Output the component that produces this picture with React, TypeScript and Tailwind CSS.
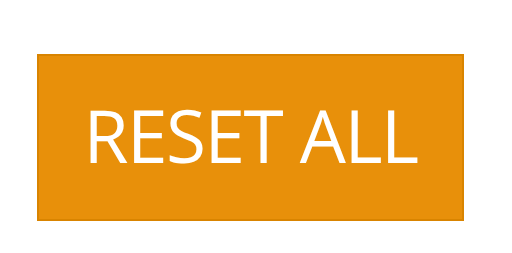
export default function App() {
  return (
    <div className="w-[512px] h-[253px] bg-white pt-[54px] pl-[37px]">
      <button className="w-[427px] h-[167px] bg-[#e8900a] border-2 border-[#d98400] flex items-center justify-center pb-[6px] text-white font-['Open_Sans',sans-serif] text-[73px] leading-none tracking-[-1.5px]">
        RESET ALL
      </button>
    </div>
  );
}
